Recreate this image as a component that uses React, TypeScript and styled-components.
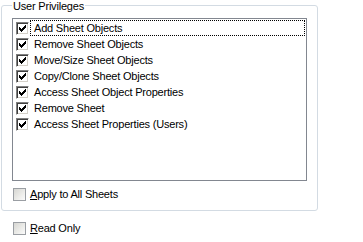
import { FC } from "react"
import styled, { createGlobalStyle } from "styled-components"

const GlobalStyle = createGlobalStyle`
  html, body {
    margin: 0;
    padding: 0;
    background: #ffffff;
  }
  body {
    font-family: "Liberation Sans", Arial, sans-serif;
    font-size: 11px;
    letter-spacing: -0.2px;
    color: #000000;
  }
`

const Page = styled.div`
  width: 363px;
  height: 242px;
  overflow: hidden;
`

const GroupBox = styled.fieldset`
  box-sizing: border-box;
  width: 317px;
  margin: 0 0 0 1px;
  padding: 7px 10px 9px 10px;
  border: 1px solid #d3dbe3;
  border-radius: 3px;
  min-width: 0;
`

const Legend = styled.legend`
  padding: 0 1px;
  margin-left: 0;
  line-height: 13px;
  height: 11px;
  font-size: 11px;
`

const ListBox = styled.div`
  box-sizing: border-box;
  height: 163px;
  border: 1px solid #828790;
  padding: 1px 1px 0 3px;
  background: #ffffff;
`

const ListRow = styled.div`
  display: flex;
  align-items: center;
  height: 16px;
`

const ItemLabel = styled.span<{ $focused?: boolean }>`
  flex: 1;
  margin-left: 1px;
  height: 14px;
  line-height: 14px;
  padding: 0 3px;
  border: 1px dotted ${(p) => (p.$focused ? "#000000" : "transparent")};
  white-space: nowrap;
`

const ClassicBox = styled.span`
  box-sizing: border-box;
  display: inline-block;
  flex: none;
  width: 13px;
  height: 13px;
  background: #ffffff;
  border-style: solid;
  border-width: 1px;
  border-color: #808080 #ffffff #ffffff #808080;
  box-shadow: inset 1px 1px 0 #404040, inset -1px -1px 0 #d4d0c8;
  position: relative;
`

const CheckGlyph = styled.svg`
  position: absolute;
  left: 2px;
  top: 2px;
`

const OptionRow = styled.label<{ $indent: number; $top: number }>`
  display: flex;
  align-items: center;
  height: 13px;
  margin: ${(p) => p.$top}px 0 0 ${(p) => p.$indent}px;
`

const XpBox = styled.span`
  box-sizing: border-box;
  display: inline-block;
  width: 13px;
  height: 13px;
  border: 1px solid #9a9ea3;
  background: linear-gradient(135deg, #d6d6d2 0%, #ebebe8 55%, #fbfbfb 100%);
`

const OptionText = styled.span`
  margin-left: 4px;
  line-height: 13px;
  white-space: nowrap;
`

const checkPixels = [
  "......X",
  ".....XX",
  "X...XXX",
  "XX.XXX.",
  "XXXXX..",
  ".XXX...",
  "..X....",
]

const Check: FC = () => (
  <CheckGlyph width="7" height="7" viewBox="0 0 7 7" shapeRendering="crispEdges">
    {checkPixels.map((row, y) =>
      row.split("").map((c, x) =>
        c === "X" ? <rect key={`${x}-${y}`} x={x} y={y} width="1" height="1" fill="#000" /> : null
      )
    )}
  </CheckGlyph>
)

const privileges = [
  "Add Sheet Objects",
  "Remove Sheet Objects",
  "Move/Size Sheet Objects",
  "Copy/Clone Sheet Objects",
  "Access Sheet Object Properties",
  "Remove Sheet",
  "Access Sheet Properties (Users)",
]

export default function App() {
  return (
    <Page>
      <GlobalStyle />
      <GroupBox>
        <Legend>User Privileges</Legend>
        <ListBox>
          {privileges.map((name, i) => (
            <ListRow key={name}>
              <ClassicBox>
                <Check />
              </ClassicBox>
              <ItemLabel $focused={i === 0}>{name}</ItemLabel>
            </ListRow>
          ))}
        </ListBox>
        <OptionRow $indent={1} $top={7}>
          <XpBox />
          <OptionText>
            <u>A</u>pply to All Sheets
          </OptionText>
        </OptionRow>
      </GroupBox>
      <OptionRow $indent={13} $top={11}>
        <XpBox />
        <OptionText>
          <u>R</u>ead Only
        </OptionText>
      </OptionRow>
    </Page>
  )
}
